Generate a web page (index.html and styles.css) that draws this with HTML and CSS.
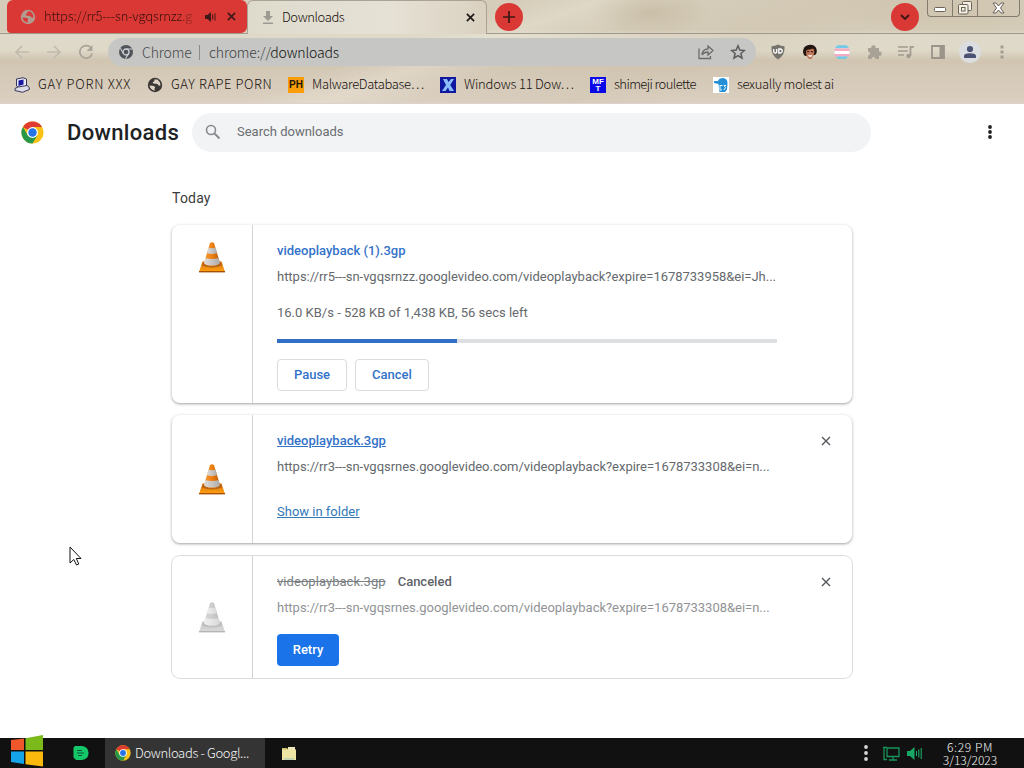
FILE: index.html
```html
<!DOCTYPE html>
<html lang="en">
<head>
<meta charset="utf-8">
<title>Downloads</title>
<link rel="stylesheet" href="styles.css">
</head>
<body>
<svg class="defs" width="0" height="0" aria-hidden="true">
  <defs>
    <linearGradient id="cone-body" x1="0" x2="1"><stop offset="0" stop-color="#f09a3a"/><stop offset=".5" stop-color="#f08212"/><stop offset="1" stop-color="#b95405"/></linearGradient>
    <linearGradient id="cone-base" x1="0" x2="0" y1="0" y2="1"><stop offset="0" stop-color="#d9700e"/><stop offset="1" stop-color="#ffa40f"/></linearGradient>
    <linearGradient id="cone-band" x1="0" x2="1"><stop offset="0" stop-color="#e0dedc"/><stop offset="1" stop-color="#aeaaa8"/></linearGradient>
    <symbol id="cone" viewBox="0 0 28 32">
      <path d="M4.500 20.500h19L27 31H1z" fill="url(#cone-base)"/>
      <path d="M5 21q9 8 18 0l1 3.500q-10 4-20 0z" fill="#8f4a17" opacity=".55"/>
      <path d="M1 30h26v1.400H1z" fill="#a94f08"/>
      <path d="M12 2q2-1.600 4 0l6 20q-1.500 2.600-8 2.600T6 22z" fill="url(#cone-body)"/>
      <path d="M10.600 6.600q3.400 1.200 6.800 0l1.700 5.400q-5.100 1.800-10.200 0z" fill="url(#cone-band)"/>
      <path d="M7.500 17q6.500 2.200 13 0l1.500 5q-2 2.600-8 2.600T6 22z" fill="url(#cone-band)"/>
    </symbol>
    <symbol id="chrome" viewBox="0 0 24 24">
      <circle cx="12" cy="12" r="11.500" fill="#fbc116"/>
      <path d="M12 12 2.040 6.250A11.500 11.500 0 0 1 21.960 6.250H12z" fill="#df3b30"/>
      <path d="M2.040 6.250A11.500 11.500 0 0 0 12 23.500l5-8.600L12 12 7 14.900z" fill="#27984a"/>
      <circle cx="12" cy="12" r="5.700" fill="#fff"/>
      <circle cx="12" cy="12" r="4.400" fill="#2673e8"/>
    </symbol>
    <symbol id="globe" viewBox="0 0 16 16">
      <circle cx="8" cy="8" r="7.200" fill="currentColor"/>
      <path d="M2.500 8.500 7 9l1.200 1.500-.7 1.200.3 2Q3.500 13 2.500 8.500z" fill="var(--land)"/>
      <path d="M7.200 2.500h3.300L13 5.500l.5 3-1.500.3-2-2H7L5.500 5.500 7.500 4z" fill="var(--land)"/>
    </symbol>
    <symbol id="close" viewBox="0 0 10 10"><path d="m1 1 8 8M9 1 1 9" fill="none" stroke="currentColor" stroke-width="var(--sw,1.4)"/></symbol>
  </defs>
</svg>

<div class="screen">
  <header class="chrome-frame">
    <div class="tabstrip">
      <div class="tab tab-alert">
        <svg class="i16 globe-tab"><use href="#globe"/></svg>
        <span class="tab-title fade">https://rr5---sn-vgqsrnzz.g</span>
        <svg class="speaker" width="12" height="12" viewBox="0 0 12 12"><path d="M0 4h2.500L6 1v10L2.500 8H0z" fill="#40191a"/><path d="M7.700 3.500v5M10 2.500v7" stroke="#40191a" fill="none"/></svg>
        <svg class="tab-close" width="9" height="9"><use href="#close"/></svg>
      </div>
      <div class="tab tab-active">
        <svg width="12" height="14" viewBox="0 0 12 14"><path d="M4 0h4v5h3L6 10 1 5h3zM1 11.500h10V13H1z" fill="#9b9b91"/></svg>
        <span class="tab-title">Downloads</span>
        <svg class="tab-close" width="9" height="9"><use href="#close"/></svg>
      </div>
      <div class="round"><svg width="14" height="14" viewBox="0 0 14 14"><path d="M7 1v12M1 7h12" stroke="#3b1715" stroke-width="1.700"/></svg></div>
      <div class="round search-tabs"><svg width="10" height="7" viewBox="0 0 10 7"><path d="m1 1 4 4 4-4" fill="none" stroke="#3b1715" stroke-width="1.800"/></svg></div>
      <div class="window-buttons">
        <span class="wb-min"><svg width="12" height="6" viewBox="0 0 12 6"><rect x=".5" y=".5" width="11" height="4" rx="1" fill="#fff" stroke="#6b6258"/></svg></span>
        <span class="wb-max"><svg width="14" height="14" viewBox="0 0 14 14"><g fill="#f4efe4" stroke="#6b6258"><rect x="4.500" y=".5" width="9" height="9" rx="1"/><rect x=".5" y="3.500" width="9.500" height="9.500" rx="1"/><rect x="3.500" y="6.500" width="3.500" height="3.500"/></g></svg></span>
        <span class="wb-close"><svg width="13" height="12" viewBox="0 0 13 12"><path d="M1 1h3l2.500 3L9 1h3L8.500 6l3.500 5H9L6.500 8 4 11H1l3.500-5z" fill="#fff" stroke="#6b6258"/></svg></span>
      </div>
    </div>

    <div class="toolbar">
      <nav class="nav">
        <span><svg width="16" height="16" viewBox="0 0 16 16"><path d="M15 8H2M8 2 2 8l6 6" fill="none" stroke="#c2baac" stroke-width="1.600"/></svg></span>
        <span><svg width="16" height="16" viewBox="0 0 16 16"><path d="M1 8h13M8 2l6 6-6 6" fill="none" stroke="#c2baac" stroke-width="1.600"/></svg></span>
        <span><svg width="16" height="16" viewBox="0 0 16 16"><path d="M13.500 4.600A6.300 6.300 0 1 0 14.200 9.500" fill="none" stroke="#aaa59a" stroke-width="1.700"/><path d="M14.500 1v6h-6z" fill="#aaa59a"/></svg></span>
      </nav>
      <div class="omnibox">
        <svg width="14" height="14" viewBox="0 0 14 14"><circle cx="7" cy="7" r="7" fill="#50545a"/><circle cx="7" cy="7" r="3" fill="#50545a" stroke="#ccd0d2" stroke-width="1.300"/><path d="M7 4h6.200M4.400 8.500l-3-5.300M9.600 8.500l-3.100 5.300" stroke="#ccd0d2" stroke-width="1.100"/></svg>
        <span class="omni-label">Chrome</span><i class="omni-sep"></i>
        <span class="omni-url"><em>chrome://</em>downloads</span>
        <svg class="share" width="16" height="16" viewBox="0 0 16 16"><path d="M1 4.500v10h11.500V12M4 11q.5-6 6-6V2l5 4.500-5 4.500V8Q6 8 4 11z" fill="none" stroke="#6b6d6d" stroke-width="1.300"/></svg>
        <svg width="16" height="16" viewBox="0 0 16 16"><path d="m8 1.800 1.800 4.300 4.600.4-3.500 3 1.100 4.600L8 11.600l-4 2.500 1.100-4.600-3.500-3 4.600-.4z" fill="none" stroke="#595b5c" stroke-width="1.500"/></svg>
      </div>
      <div class="extensions">
        <span><svg width="16" height="16" viewBox="0 0 16 16"><path d="M8 .5q3 1.700 6.500 1.800Q15.500 11 8 15.500.500 11 1.500 2.300 5 2.200 8 .5z" fill="#77746d"/><path d="M3.700 5v2.500q0 1.500 1.500 1.500t1.500-1.500V5M8.800 5v4h1.500q2-.3 2-2t-2-2z" fill="none" stroke="#fff" stroke-width="1.300"/></svg></span>
        <span><svg width="16" height="16" viewBox="0 0 16 16"><path d="M3 12Q0 9 1.500 5 3 1 8 .7 13 .6 14.500 5q1 4-1.500 6z" fill="#24140f"/><path d="M4 7q1-2 4-1.500l3-1q2 2 1 5.500l-2.500 5H7L4.500 12z" fill="#c07a5b"/><path d="M5 7.700h2.300M9 7.700h2.200" stroke="#35170f"/><path d="M6 10.700q2.500 1 4.500 0-.8 2.200-2.300 2.200T6 10.700z" fill="#fff"/></svg></span>
        <span><svg width="16" height="16" viewBox="0 0 16 16"><path d="M3.500 1.300h9L15 4H1z" fill="#72c9e8"/><path d="M.5 4.500h15V7H.5zM.5 10h15v2.200H.5z" fill="#f2adc5"/><path d="M.5 7h15v3H.5z" fill="#fff"/><path d="M2 12.500h12l-2 2.500H4z" fill="#72c9e8"/></svg></span>
        <span><svg width="16" height="16" viewBox="0 0 16 16"><path d="M2 4h3.300a2.200 2.200 0 1 1 4.200 0H13v3.500a2.200 2.200 0 1 1 0 4.300V15H9.500a2 2 0 0 0-4 0H2v-3.500a2 2 0 0 0 0-4z" fill="#a8a196"/></svg></span>
        <span><svg width="18" height="14" viewBox="0 0 18 14"><path d="M1 2h10M1 6h10M1 10h6M13.500 11V1.800H17" fill="none" stroke="#a29b90" stroke-width="1.700"/><circle cx="11.500" cy="11" r="2.200" fill="#a29b90"/></svg></span>
        <span><svg width="14" height="14" viewBox="0 0 14 14"><path d="M1 1h12v12H1z" fill="none" stroke="#9b948b" stroke-width="1.800"/><path d="M8.500 1H13v12H8.500z" fill="#9b948b"/></svg></span>
        <span class="avatar"><svg width="14" height="14" viewBox="0 0 14 14"><circle cx="7" cy="4" r="3.100" fill="#4b5273"/><path d="M1 13v-2q0-2.800 6-2.800t6 2.800v2z" fill="#4b5273"/></svg></span>
        <span><svg width="4" height="14" viewBox="0 0 4 14"><path d="M.5.500h3v3h-3zM.5 5.500h3v3h-3zM.5 10.500h3v3h-3z" fill="#a59d92"/></svg></span>
      </div>
    </div>

    <div class="bookmarks">
      <div class="bm b1"><svg width="16" height="16" viewBox="0 0 16 16"><path d="M2.500 2 9 .7 12.500 2v7L6 11.300 2.500 9z" fill="#e8e8f2" stroke="#38355f"/><path d="m1 11.500 3-1.500 9-1.500 2.300 2v2L8.500 15.300 1 13.500z" fill="#dcdce4" stroke="#38355f"/><path d="m4.500 3.500 5-1v5l-5 1.500z" fill="#1817a0"/></svg><span>GAY PORN XXX</span></div>
      <div class="bm b2"><svg class="i16 globe-bm"><use href="#globe"/></svg><span>GAY RAPE PORN</span></div>
      <div class="bm b3"><b class="ph">PH</b><span>MalwareDatabase⋯</span></div>
      <div class="bm b4"><svg width="16" height="16" viewBox="0 0 16 16"><path d="M0 0h16v16H0z" fill="#1018a0"/><path d="M3 2h4l1.500 3L11 2h3l-3.800 6L14 14H9.500L8 10.500 5.500 14H2l4-6z" fill="#8bbdfb"/></svg><span>Windows 11 Dow⋯</span></div>
      <div class="bm b5"><b class="mft">MF<br>T</b><span>shimeji roulette</span></div>
      <div class="bm b6"><svg width="16" height="16" viewBox="0 0 16 16"><path d="M0 0h16v16H0z" fill="#fff"/><path d="M1 4h4q1-3 5-3 4.500.5 4.500 5L14 12.500 12 15H6.500L5.500 7 1 6z" fill="#258fd5"/><path d="M7 8.500h2.500M7 8v5h2M11 8.500h2M11 8.500l1.500 2-1.500 2.500" fill="none" stroke="#e8f5ff"/></svg><span>sexually molest ai</span></div>
    </div>
  </header>

  <main class="page">
    <div class="page-head">
      <svg class="logo" width="23" height="23"><use href="#chrome"/></svg>
      <h1>Downloads</h1>
      <div class="search">
        <svg width="16" height="16" viewBox="0 0 16 16"><circle cx="6" cy="6" r="4.500" fill="none" stroke="#878b90" stroke-width="1.600"/><path d="m9.500 9.500 5 5" stroke="#878b90" stroke-width="1.900"/></svg>
        <span>Search downloads</span>
      </div>
      <svg class="more" width="4" height="14" viewBox="0 0 4 14"><g fill="#202124"><circle cx="2" cy="2" r="1.900"/><circle cx="2" cy="7" r="1.900"/><circle cx="2" cy="12" r="1.900"/></g></svg>
    </div>

    <section class="list">
      <h2>Today</h2>
      <article class="card c1">
        <div class="thumb top"><svg width="28" height="32"><use href="#cone"/></svg></div>
        <div class="info">
          <div class="name">videoplayback (1).3gp</div>
          <div class="url u1">https://rr5---sn-vgqsrnzz.googlevideo.com/videoplayback?expire=1678733958&amp;ei=Jh...</div>
          <div class="status">16.0 KB/s - 528 KB of 1,438 KB, 56 secs left</div>
          <div class="bar"><i></i></div>
          <div class="actions"><button class="btn pause">Pause</button><button class="btn cancel">Cancel</button></div>
        </div>
      </article>
      <article class="card c2">
        <div class="thumb"><svg width="28" height="32"><use href="#cone"/></svg></div>
        <div class="info">
          <div class="name link">videoplayback.3gp</div>
          <div class="url">https://rr3---sn-vgqsrnes.googlevideo.com/videoplayback?expire=1678733308&amp;ei=n...</div>
          <div class="show link">Show in folder</div>
        </div>
        <svg class="remove" width="10" height="10"><use href="#close"/></svg>
      </article>
      <article class="card c3">
        <div class="thumb gray"><svg width="28" height="32"><use href="#cone"/></svg></div>
        <div class="info">
          <div class="name"><s>videoplayback.3gp</s><span class="tag">Canceled</span></div>
          <div class="url faded">https://rr3---sn-vgqsrnes.googlevideo.com/videoplayback?expire=1678733308&amp;ei=n...</div>
          <button class="btn retry">Retry</button>
        </div>
        <svg class="remove" width="10" height="10"><use href="#close"/></svg>
      </article>
    </section>
  </main>

  <footer class="taskbar">
    <svg class="start" width="34" height="32" viewBox="0 0 34 32"><path d="M1 5 14 3.500V15H1z" fill="#f0582b"/><path d="M15.500 3.200 33 0v15H15.500z" fill="#7cb91a"/><path d="M1 16.500h13V29L1 27z" fill="#16a4e8"/><path d="M15.500 16.500H33v15l-17.500-2.200z" fill="#fcb90d"/></svg>
    <svg class="dapp" width="16" height="14" viewBox="0 0 16 14"><path d="M2 0h7q6.500 1 6.500 7T9 14H3L.5 11.500V1.500z" fill="#14c768"/><path d="M4 4.500h5M4 7h7M5 9.500h4" stroke="#075c38" stroke-width="1.200"/></svg>
    <div class="task"><svg width="16" height="16"><use href="#chrome"/></svg><span>Downloads - Googl...</span></div>
    <svg class="folder" width="14" height="13" viewBox="0 0 14 13"><path d="M0 1h5l1.500 2H0z" fill="#cdbb68"/><path d="M6 0h7v3H6z" fill="#eee9bd"/><path d="M0 2.500h14V13H0z" fill="#eee5a4"/><path d="M2 11h10v2H2z" fill="#c3d2b2"/></svg>
    <svg class="tray-dots" width="4" height="16" viewBox="0 0 4 16"><g fill="#d6d6d6"><circle cx="2" cy="2" r="1.900"/><circle cx="2" cy="8" r="1.900"/><circle cx="2" cy="14" r="1.900"/></g></svg>
    <svg class="net" width="17" height="15" viewBox="0 0 17 15"><path d="M4 2h12v8.500H4zM10 11v3M6 14h8M1 1v12.500h3M0 1.500h4" fill="none" stroke="#18935a" stroke-width="1.300"/></svg>
    <svg class="vol" width="16" height="13" viewBox="0 0 16 13"><path d="M0 4h3l4.500-4v13L3 9H0z" fill="#18a866"/><path d="M9.500 4v5M11.800 2.500v8M14.200 1v11" stroke="#18a866" stroke-width="1.100"/></svg>
    <div class="clock"><span class="time">6:29 PM</span><span>3/13/2023</span></div>
  </footer>
  <svg class="cursor" width="13" height="20" viewBox="0 0 13 20"><path d="M1 1v16l3.800-3.500L7.500 19l2.300-1-2.500-5.500H12z" fill="#fff" stroke="#111"/></svg>
</div>
</body>
</html>
```
FILE: styles.css
```css
* { box-sizing: border-box; }
body { margin: 0; overflow: hidden; font-family: Roboto, "Liberation Sans", sans-serif; background: #fff; }
h1, h2 { margin: 0; font-weight: 400; }
svg { flex: none; display: block; }
.defs { position: absolute; }
.i16 { width: 16px; height: 16px; }
.screen { width: 1024px; height: 768px; display: flex; flex-direction: column; overflow: hidden; }

.chrome-frame {
  height: 104px; flex: none; display: flex; flex-direction: column;
  font-family: "Noto Sans CJK KR", Roboto, sans-serif; font-weight: 300; color: #17120e;
  border-bottom: 1px solid #ddd3cd;
  background:
    radial-gradient(ellipse 60px 25px at 650px 12px, #bfb49a88, transparent),
    radial-gradient(ellipse 120px 30px at 950px 8px, #c2b59a55, transparent),
    linear-gradient(160deg, transparent 40%, #efe9dc66 46%, transparent 53%, #c6b9a233 65%, transparent 75%),
    linear-gradient(#d5ccb9 0 30px, #dfd9c9 35px 50px, #d1c5b2 60px, #dbd0c1 103px);
}
.tabstrip { height: 34px; flex: none; display: flex; align-items: flex-start; border-bottom: 1px solid #a0988a; }
.tab { display: flex; align-items: center; height: 33px; font-size: 13px; }
.tab-alert { width: 240px; margin-left: 7px; padding: 0 11px 0 13px; background: #d93834; border-radius: 6px 6px 6px 4px; color: #3c100e; }
.globe-tab { color: #b39b91; --land: #d93834; }
.tab-title { white-space: nowrap; line-height: 20px; margin-top: -2px; }
.fade { width: 156px; margin-left: 8px; letter-spacing: -.15px; -webkit-mask-image: linear-gradient(90deg, #000 85%, transparent); mask-image: linear-gradient(90deg, #000 85%, transparent); }
.speaker { margin-left: 5px; }
.tab-close { --sw: 1.9; color: #1e1a18; margin-left: auto; }
.tab-alert .tab-close { color: #40191a; }
.tab-active { width: 240px; height: 34px; padding: 0 11px 0 14px; background: linear-gradient(90deg, #dedbcd, #e6e1d5 60%, #dad1c0); border: 1px solid #aaa395; border-bottom: 0; border-radius: 6px 6px 0 0; }
.tab-active .tab-title { margin-left: 8px; letter-spacing: -.4px; }
.round { width: 28px; height: 28px; margin: 3px 0 0 8px; border-radius: 50%; background: #d93834; display: flex; align-items: center; justify-content: center; }
.search-tabs { margin-left: auto; }
.window-buttons { display: flex; width: 93px; height: 17px; margin: 0 4px 0 8px; border: 1px solid #837b6e; border-top: 0; border-radius: 0 0 4px 4px; }
.window-buttons span { display: flex; justify-content: center; align-items: center; border-right: 1px solid #837b6e; }
.window-buttons .wb-min { width: 25px; padding-top: 4px; }
.window-buttons .wb-max { width: 25px; }
.window-buttons .wb-close { flex: 1; border: 0; }

.toolbar { height: 36px; flex: none; display: flex; align-items: center; }
.nav { display: flex; margin-left: 6px; }
.nav span, .extensions span { width: 32px; height: 28px; display: flex; align-items: center; justify-content: center; }
.omnibox { width: 648px; height: 28px; margin-left: 6px; border-radius: 14px; background: #c6c7c4; display: flex; align-items: center; padding: 0 10px 0 11px; font-size: 14px; }
.omni-label { margin-left: 9px; color: #46484a; width: 48px; white-space: nowrap; letter-spacing: -.1px; }
.omni-sep { width: 1px; height: 15px; background: #8b8c8c; margin: 0 9px; }
.omni-url { color: #111; letter-spacing: -.15px; }
.omni-url em { font-style: normal; color: #404143; }
.share { margin-left: auto; margin-right: 16px; }
.extensions { display: flex; margin-left: 6px; }
.extensions .avatar { width: 22px; height: 22px; margin: 3px 5px; border-radius: 50%; background: #dcdde0; }

.bookmarks { height: 30px; display: flex; align-items: center; padding-left: 14px; font-size: 13px; }
.bm { display: flex; align-items: center; gap: 8px; white-space: nowrap; }
.bm span { line-height: 20px; margin-top: -2px; }
.b1 { width: 133px; letter-spacing: .75px; }
.b2 { width: 141px; letter-spacing: .57px; }
.b3 { width: 152px; letter-spacing: -.35px; }
.b4 { width: 150px; letter-spacing: -.2px; }
.b5 { width: 123px; letter-spacing: -.57px; }
.b6 { letter-spacing: -.35px; }
.globe-bm { color: #3c3835; --land: #ddd2c5; }
.ph { width: 16px; height: 16px; background: #fa9d0b; color: #211503; font: bold 10px/16px "Liberation Sans", sans-serif; text-align: center; letter-spacing: 0; }
.mft { width: 16px; height: 16px; background: #0909e8; color: #fff; font: bold 8px/7px "Liberation Sans", sans-serif; text-align: center; padding-top: 1px; letter-spacing: 0; }

.page { height: 634px; flex: none; background: #fff; }
.page-head { height: 56px; display: flex; align-items: center; padding: 0 32px 0 21px; }
.page-head h1 { margin-left: 23px; width: 125px; font-size: 22px; font-weight: 500; color: #202124; letter-spacing: .33px; }
.search { width: 679px; height: 39px; border-radius: 20px; background: #f1f3f4; display: flex; align-items: center; padding-left: 13px; gap: 16px; font-size: 13px; color: #6b6e72; }
.search span { margin-top: -1px; }
.more { margin-left: auto; }
.list { width: 680px; margin: 30px auto 0; }
.list h2 { height: 20px; font-size: 14px; line-height: 17px; color: #3c3d40; letter-spacing: .2px; }
.card { display: flex; background: #fff; border-radius: 8px; box-shadow: 0 1px 3px 1px #3c404326, 0 1px 2px #3c40434d; font-size: 13px; }
.c1 { height: 178px; margin-top: 15px; }
.c2 { height: 128px; margin-top: 12px; }
.c3 { height: 122px; margin-top: 13px; box-shadow: 0 0 0 1px #dadce0; }
.thumb { width: 81px; flex: none; border-right: 1px solid #d2d3d5; display: flex; align-items: center; justify-content: center; }
.thumb.top { align-items: flex-start; padding-top: 16px; }
.gray { filter: grayscale(1); }
.gray svg { opacity: .45; }
.info { width: 524px; padding-left: 24px; padding-top: 17px; }
.name { height: 18px; line-height: 18px; color: #3372c9; font-weight: 500; white-space: nowrap; }
.url { height: 18px; line-height: 18px; margin-top: 8px; color: #65696d; white-space: nowrap; letter-spacing: -.02px; }
.status { height: 18px; line-height: 18px; margin-top: 18px; color: #65696d; }
.bar { height: 4px; width: 500px; margin-top: 17px; background: #dddfe0; }
.bar i { display: block; width: 180px; height: 4px; background: #306fc5; }
.actions { display: flex; gap: 8px; margin-top: 16px; }
.btn { height: 32px; padding: 0 0 2px; border: 1px solid #dadce0; border-radius: 4px; background: #fff; color: #3372c9; font: 500 13px Roboto, sans-serif; }
.pause { width: 70px; }
.cancel { width: 74px; }
.link { text-decoration: underline; }
.show { margin-top: 27px; line-height: 18px; color: #3279b8; }
.remove { margin: 21px 21px 0 auto; color: #55585c; }
.c3 .name { color: #5f6368; }
.c3 s { color: #7c7f83; font-weight: 400; letter-spacing: .05px; }
.tag { margin-left: 12px; }
.faded { color: #919396; }
.retry { display: block; width: 62px; margin-top: 17px; border: 0; background: #1a73e8; color: #fff; }

.taskbar { height: 30px; flex: none; background: #111; color: #f4f4f4; display: flex; align-items: center; font-family: "Noto Sans CJK KR", Roboto, sans-serif; font-weight: 300; font-size: 13px; }
.start { margin: -5px 0 0 10px; }
.dapp { margin-left: 29px; }
.task { margin-left: 16px; width: 160px; height: 30px; background: #343434; display: flex; align-items: center; padding-left: 10px; gap: 4px; white-space: nowrap; }
.task span { letter-spacing: -.33px; margin-top: -2px; }
.folder { margin-left: 17px; }
.tray-dots { margin-left: auto; }
.net { margin-left: 15px; }
.vol { margin-left: 7px; }
.clock { width: 70px; margin: -1px 19px 0 12px; display: flex; flex-direction: column; align-items: center; font-size: 12px; }
.clock span { line-height: 13px; height: 13px; }
.clock .time { letter-spacing: .6px; }
.cursor { position: absolute; left: 69px; top: 546px; }
```
